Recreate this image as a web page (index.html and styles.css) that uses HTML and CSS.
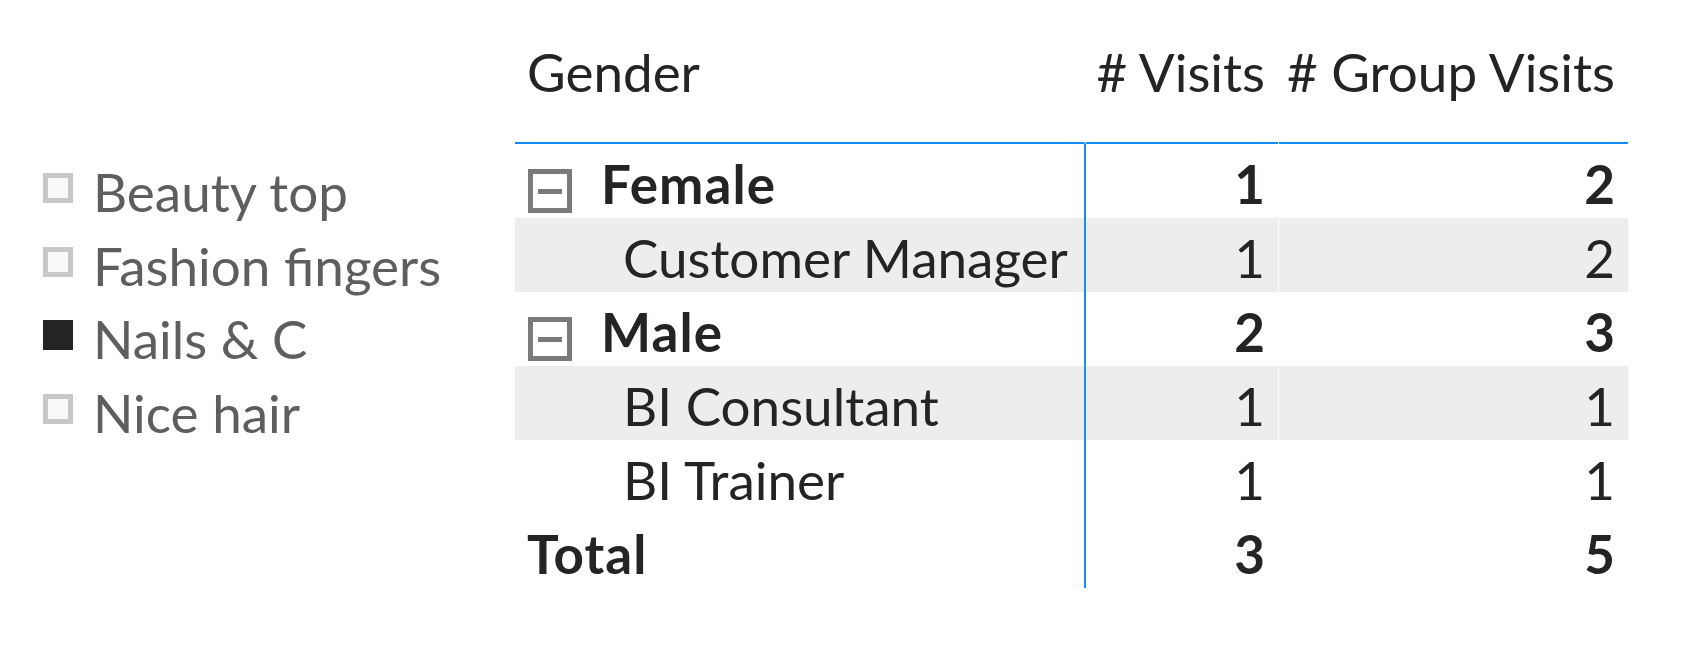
FILE: index.html
```html
<!DOCTYPE html>
<html lang="en">
<head>
<meta charset="utf-8">
<title>Visits by Gender</title>
<link rel="stylesheet" href="styles.css">
</head>
<body>
<div class="page">
  <ul class="legend">
    <li class="legend-item"><span class="check"></span><span class="label">Beauty top</span></li>
    <li class="legend-item"><span class="check"></span><span class="label">Fashion fingers</span></li>
    <li class="legend-item"><span class="check checked"></span><span class="label">Nails &amp; C</span></li>
    <li class="legend-item"><span class="check"></span><span class="label">Nice hair</span></li>
  </ul>
  <div class="matrix">
    <div class="row head">
      <div class="cell c1">Gender</div>
      <div class="cell c2 num">#&nbsp;Visits</div>
      <div class="cell c3 num">#&nbsp;Group&nbsp;Visits</div>
    </div>
    <div class="row body group">
      <div class="cell c1"><span class="toggle"></span><span class="gname">Female</span></div>
      <div class="cell c2 num">1</div>
      <div class="cell c3 num">2</div>
    </div>
    <div class="row body child shade">
      <div class="cell c1"><span class="cname">Customer Manager</span></div>
      <div class="cell c2 num">1</div>
      <div class="cell c3 num">2</div>
    </div>
    <div class="row body group">
      <div class="cell c1"><span class="toggle"></span><span class="gname">Male</span></div>
      <div class="cell c2 num">2</div>
      <div class="cell c3 num">3</div>
    </div>
    <div class="row body child shade">
      <div class="cell c1"><span class="cname">BI Consultant</span></div>
      <div class="cell c2 num">1</div>
      <div class="cell c3 num">1</div>
    </div>
    <div class="row body child">
      <div class="cell c1"><span class="cname">BI Trainer</span></div>
      <div class="cell c2 num">1</div>
      <div class="cell c3 num">1</div>
    </div>
    <div class="row body total">
      <div class="cell c1"><span class="gname">Total</span></div>
      <div class="cell c2 num">3</div>
      <div class="cell c3 num">5</div>
    </div>
  </div>
</div>
</body>
</html>
```
FILE: styles.css
```css
html, body {
  margin: 0;
  padding: 0;
  background: #ffffff;
}

body {
  font-family: "Lato", "Open Sans", "DejaVu Sans", sans-serif;
  font-size: 53px;
  color: #252423;
}

.page {
  display: flex;
  width: 1682px;
  height: 648px;
}

/* legend / slicer */
.legend {
  list-style: none;
  margin: 155px 0 0 0;
  padding: 0 0 0 43px;
  width: 515px;
  flex: none;
  box-sizing: border-box;
}

.legend-item {
  display: flex;
  align-items: center;
  gap: 20px;
  height: 73.7px;
  line-height: 74px;
  color: #605e5c;
  white-space: nowrap;
}

.check {
  flex: none;
  width: 30px;
  height: 30px;
  box-sizing: border-box;
  border: 5px solid #c8c8c8;
  background: #f9f9f9;
  margin-bottom: 8px;
}

.check.checked {
  border-color: #252423;
  background: #252423;
}

/* matrix */
.matrix {
  width: 1113px;
  flex: none;
  display: flex;
  flex-direction: column;
}

.row {
  display: flex;
  height: 74px;
  line-height: 74px;
}

.cell {
  box-sizing: border-box;
  white-space: nowrap;
  display: flex;
  align-items: center;
}

.body .cell {
  padding-top: 5px;
}

.c1 {
  width: 571px;
  padding-left: 12px;
  border-right: 2px solid #118dff;
}

.c2 {
  width: 192px;
  margin-right: 1px;
}

.c3 {
  width: 349px;
}

.num {
  justify-content: flex-end;
  padding-right: 13px;
}

.head {
  height: 144px;
}

.head .cell {
  align-items: flex-end;
  padding-bottom: 33px;
  border-bottom: 2px solid #118dff;
}

.head .c1 {
  border-right: 2px solid transparent;
  border-bottom: 2px solid #118dff;
}

.shade .cell {
  background: #ededed;
}

.group .cell,
.total .cell {
  font-weight: 700;
}

.gname {
  letter-spacing: 1.1px;
}

.toggle {
  flex: none;
  width: 44px;
  height: 44px;
  box-sizing: border-box;
  border: 5px solid #7a7a7a;
  background: #ffffff;
  margin: 20px 29px 0 1px;
  align-self: flex-start;
  display: flex;
  align-items: center;
  justify-content: center;
}

.toggle::before {
  content: "";
  width: 24px;
  height: 5px;
  background: #7a7a7a;
}

.cname {
  padding-left: 96px;
}
```
